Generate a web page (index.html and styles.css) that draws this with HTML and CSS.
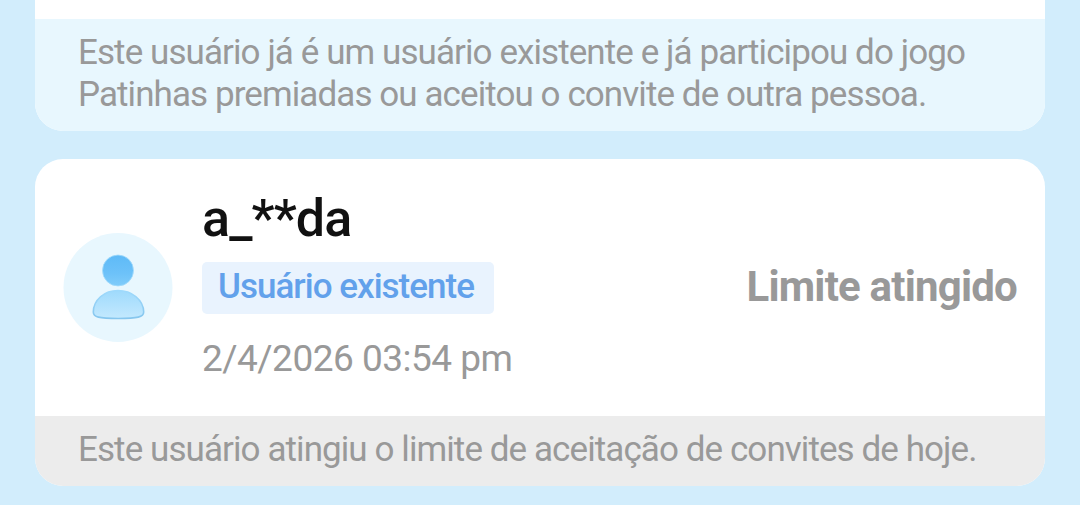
FILE: index.html
```html
<!DOCTYPE html>
<html lang="pt-BR">
<head>
    <meta charset="UTF-8">
    <meta name="viewport" content="width=device-width, initial-scale=1.0">
    <title>Convites</title>
    <link rel="stylesheet" href="styles.css">
</head>
<body>
    <div class="list">
        <div class="card card-first">
            <div class="note note-blue">
                Este usuário já é um usuário existente e já participou do jogo<br>
                Patinhas premiadas ou aceitou o convite de outra pessoa.
            </div>
        </div>
        <div class="card">
            <div class="user">
                <svg class="avatar" viewBox="0 0 110 110">
                    <defs>
                        <linearGradient id="head" x1="0" y1="0" x2="0" y2="1">
                            <stop offset="0" stop-color="#5ebaf7"/>
                            <stop offset="0.6" stop-color="#6dc2f9"/>
                            <stop offset="1" stop-color="#80ccfa"/>
                        </linearGradient>
                        <linearGradient id="body" x1="0" y1="0" x2="0" y2="1">
                            <stop offset="0" stop-color="#9fdafc"/>
                            <stop offset="1" stop-color="#c3e9fe"/>
                        </linearGradient>
                        <linearGradient id="edge" x1="0" y1="0" x2="0" y2="1">
                            <stop offset="0" stop-color="#9fdafc"/>
                            <stop offset="1" stop-color="#86c6ee"/>
                        </linearGradient>
                    </defs>
                    <circle cx="55" cy="54.5" r="54.5" fill="#e8f7fe"/>
                    <circle cx="55" cy="37.5" r="15.5" fill="url(#head)" stroke="#a5dcfb" stroke-width="0.8"/>
                    <path d="M30.3 79C30.5 67 41 57.5 55 57.5S80.500 67 80.700 79c0 5-6 6.500-25.500 6.500S30.300 84 30.300 79z" fill="url(#body)" stroke="url(#edge)" stroke-width="1.600"/>
                </svg>
                <div class="info">
                    <div class="name">a_**da</div>
                    <div class="tag">Usuário existente</div>
                    <div class="date">2/4/2026 03:54 pm</div>
                </div>
                <div class="status">Limite atingido</div>
            </div>
            <div class="note note-gray">Este usuário atingiu o limite de aceitação de convites de hoje.</div>
        </div>
    </div>
</body>
</html>
```
FILE: styles.css
```css
* {
    box-sizing: border-box;
}
body {
    margin: 0;
    height: 505px;
    overflow: hidden;
    background-color: #d2edfc;
    font-family: Roboto, "Liberation Sans", sans-serif;
}
.list {
    padding: 0 35px;
}
.card {
    background: #fff;
    border-radius: 28px;
    overflow: hidden;
    margin-bottom: 28px;
}
.card-first {
    border-radius: 0 0 28px 28px;
    padding-top: 19px;
}
.note {
    padding: 13px 43px 0;
    font-size: 35px;
    line-height: 42px;
    letter-spacing: -0.92px;
    color: #999;
    white-space: nowrap;
}
.note-blue {
    height: 112px;
    background: #e8f7fe;
}
.note-gray {
    height: 70px;
    background: #ececec;
}
.user {
    display: flex;
    align-items: flex-start;
    height: 257px;
    padding: 0 28px;
}
.avatar {
    width: 110px;
    height: 110px;
    margin: 74px 29px 0 0;
}
.info {
    flex: 1;
    padding-top: 30px;
}
.name {
    font-size: 52px;
    line-height: 60px;
    font-weight: 500;
    letter-spacing: -0.9px;
    color: #111;
}
.tag {
    width: 292px;
    height: 52px;
    margin: 13px 0 23px;
    padding-left: 16px;
    border-radius: 5px;
    background: #e9f3fe;
    font-size: 35px;
    line-height: 49px;
    font-weight: 500;
    letter-spacing: -0.98px;
    color: #62a1eb;
    white-space: nowrap;
}
.date {
    font-size: 37px;
    line-height: 44px;
    letter-spacing: -0.5px;
    color: #999;
}
.status {
    margin-top: 103px;
    font-size: 42px;
    line-height: 50px;
    font-weight: 700;
    letter-spacing: -0.8px;
    color: #999;
    white-space: nowrap;
}
```
